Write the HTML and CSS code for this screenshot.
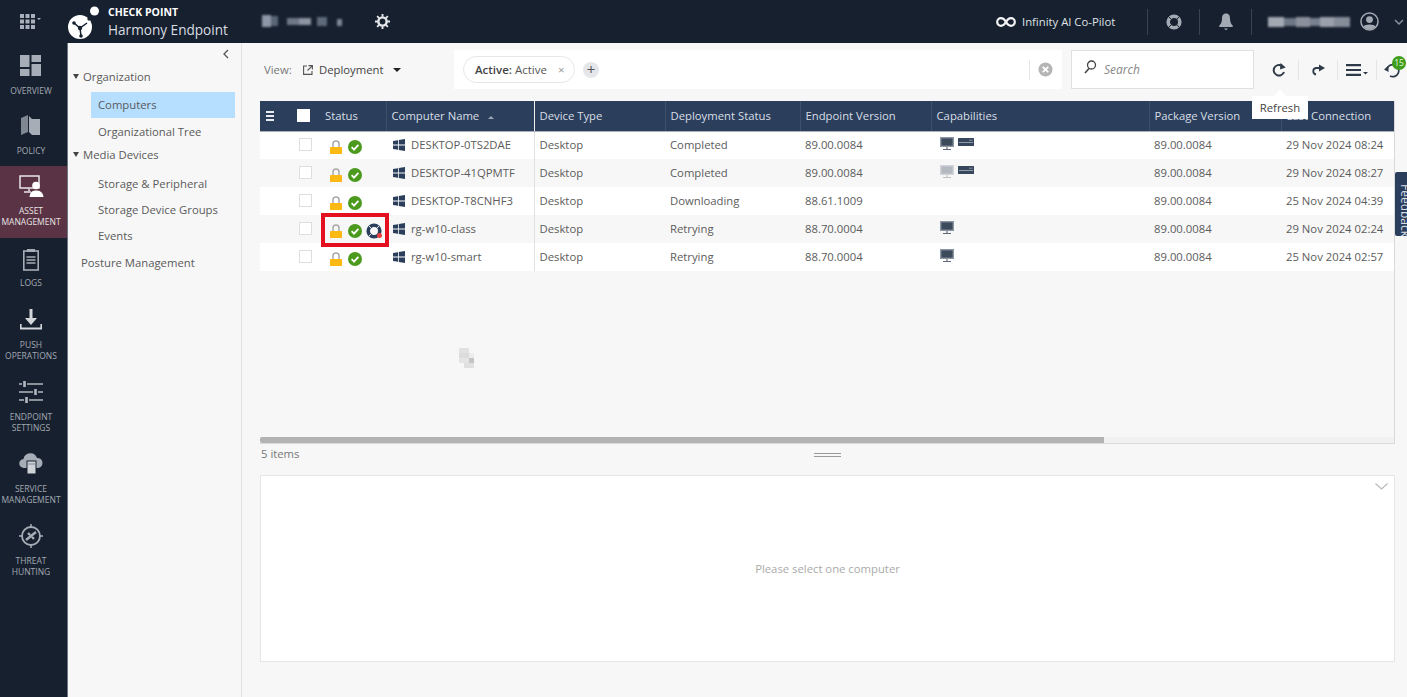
FILE: index.html
```html
<!DOCTYPE html>
<html>
<head>
  <title>Harmony Endpoint</title>
  <link rel="stylesheet" href="styles.css">
</head>
<body>

<!-- shared icons -->
<svg class="defs" width="0" height="0">
  <symbol id="i-win" viewBox="0 0 12 12"><path d="M0 2 L5 1.2 V5.6 H0Z M5.8 1 L12 0 V5.6 H5.8Z M0 6.4 H5 V10.8 L0 10Z M5.8 6.4 H12 V12 L5.8 11Z"/></symbol>
  <symbol id="i-lock" viewBox="0 0 12 14"><path d="M3 7 V4 a3 3 0 0 1 6 0 V7" fill="none" stroke="#a9a9a9" stroke-width="1.5"/><rect x="0" y="7" width="12" height="7" rx=".5" fill="#fdb913"/></symbol>
  <symbol id="i-ok" viewBox="0 0 14 14"><circle cx="7" cy="7" r="7" fill="#4b9a1e"/><path d="M3.6 7.2 L6 9.6 L10.4 4.8" fill="none" stroke="#fff" stroke-width="1.8"/></symbol>
  <symbol id="i-buoy" viewBox="0 0 16 16"><circle cx="8" cy="8" r="5.8" fill="none" stroke="#2b3f5c" stroke-width="3.6"/><path d="M2.6 2.6 L5 5 M13.4 2.6 L11 5 M2.6 13.4 L5 11" stroke="#dfe3e8" stroke-width="1"/></symbol>
  <symbol id="i-monitor" viewBox="0 0 14 13"><rect x=".7" y=".7" width="12.6" height="8.6" fill="#3d4a5c" stroke="#8c96a3" stroke-width="1.4"/><path d="M7 10 V12 M3 12.5 H11" stroke="#5d6876" stroke-width="1.1"/></symbol>
  <symbol id="i-server" viewBox="0 0 16 8"><rect width="16" height="8" rx=".5" fill="#36465c"/><path d="M1 4.5 H15" stroke="#aab2bd" stroke-width=".8"/><path d="M11 2.2 H14.5" stroke="#aab2bd" stroke-width=".7"/></symbol>
</svg>

<header class="topbar">
  <div class="apps">
    <svg width="24" height="16" viewBox="0 0 24 16" fill="#a9b0bb"><path d="M0 1h4v4H0zM5.5 1h4v4h-4zM11 1h4v4h-4zM0 6.5h4v4H0zM5.5 6.5h4v4h-4zM11 6.5h4v4h-4zM0 12h4v4H0zM5.5 12h4v4h-4zM11 12h4v4h-4z"/><path d="M17 5h4l-2 2z"/></svg>
  </div>
  <div class="logo">
    <svg width="32" height="36" viewBox="0 0 32 36">
      <circle cx="12" cy="21" r="12" fill="#fff"/>
      <circle cx="26.500" cy="5" r="4.500" fill="#fff"/>
      <path d="M24 10 L20 14" stroke="#17202f" stroke-width="3"/>
      <path d="M6 17 L12 22 L19 17 M12 22 L13 30" stroke="#17202f" stroke-width="1.500" fill="none"/>
      <circle cx="12" cy="22" r="2.200" fill="#17202f"/>
      <circle cx="6" cy="17" r="1.800" fill="#17202f"/>
      <circle cx="13" cy="30" r="1.800" fill="#17202f"/>
    </svg>
    <div class="brand">
      <b>CHECK POINT</b>
      <span>Harmony Endpoint</span>
    </div>
  </div>
  <svg class="mosaic tenant" width="80" height="12" viewBox="0 0 80 12">
    <rect width="9" height="12" x="0" fill="#8d97a6"/><rect width="7" height="10" x="9" y="1" fill="#596475"/>
    <rect width="12" height="7" x="25" y="3" fill="#6e7886"/><rect width="12" height="7" x="37" y="3" fill="#8d95a1"/>
    <rect width="10" height="9" x="55" y="2" fill="#5f6a79"/><rect width="5" height="7" x="75" y="4" fill="#7d8794"/>
  </svg>
  <svg class="gear" width="15" height="15" viewBox="0 0 16 16"><circle cx="8" cy="8" r="4.400" fill="none" stroke="#e6e8eb" stroke-width="2.600"/><path d="M8 0v3M8 13v3M0 8h3M13 8h3M2.300 2.300l2.100 2.100M11.600 11.600l2.100 2.100M2.300 13.700l2.100-2.100M11.600 4.400l2.100-2.100" stroke="#e6e8eb" stroke-width="2"/></svg>

  <div class="top-right">
    <div class="copilot">
      <svg width="20" height="10" viewBox="0 0 20 10"><path d="M10 5 C8 1.500 6.500 1.200 5 1.200 a3.800 3.800 0 0 0 0 7.600 C6.500 8.800 8 8.500 10 5 C12 1.500 13.500 1.200 15 1.200 a3.800 3.800 0 0 1 0 7.600 C13.500 8.800 12 8.500 10 5Z" fill="none" stroke="#f2f3f5" stroke-width="2.200"/></svg>
      <span>Infinity AI Co-Pilot</span>
    </div>
    <div class="top-btn">
      <svg width="16" height="16" viewBox="0 0 16 16"><circle cx="8" cy="8" r="5.800" fill="none" stroke="#a3aab4" stroke-width="3.600"/><path d="M2.600 2.600L5 5M13.400 2.600L11 5M2.600 13.400L5 11M13.400 13.400L11 11" stroke="#17202f" stroke-width="1"/></svg>
    </div>
    <div class="top-btn">
      <svg width="14" height="18" viewBox="0 0 14 18" fill="#a3aab4"><path d="M7 0.500 C3.800 .5 3 3 3 5.500 C3 9 2 11 .3 12.500 V14 H13.700 V12.500 C12 11 11 9 11 5.500 C11 3 10.200 .5 7 .5Z"/><path d="M5 15.500 H9 L7 17.300Z"/></svg>
    </div>
    <div class="top-user">
      <svg class="mosaic" width="82" height="10" viewBox="0 0 82 10">
        <rect width="16" height="10" fill="#a3a9b2"/><rect width="12" height="8" x="16" y="1" fill="#6e7785"/><rect width="14" height="10" x="28" fill="#8a919c"/>
        <rect width="10" height="8" x="42" y="1" fill="#77808d"/><rect width="14" height="10" x="52" fill="#9aa1ab"/><rect width="16" height="10" x="66" fill="#858d99"/>
      </svg>
      <svg width="19" height="19" viewBox="0 0 20 20"><circle cx="10" cy="10" r="9" fill="none" stroke="#a3aab4" stroke-width="1.600"/><circle cx="10" cy="8" r="3.600" fill="#a3aab4"/><path d="M3.500 15.500 C5 12.500 15 12.500 16.500 15.500 A9 9 0 0 1 3.500 15.500Z" fill="#a3aab4"/></svg>
      <svg class="user-caret" width="10" height="6" viewBox="0 0 10 6"><path d="M1 1l4 4 4-4" fill="none" stroke="#8d95a1" stroke-width="1.400"/></svg>
    </div>
  </div>
</header>

<div class="body-row">

  <!-- Left navigation -->
  <nav class="sidenav">
    <a class="nav-item">
      <svg width="22" height="22" viewBox="0 0 22 22" fill="#a7adb6"><path d="M0 0h9.500v12H0zM11.500 0H21v7h-9.500zM0 14h9.500v7H0zM11.500 9H21v12h-9.500z"/></svg>
      <span>OVERVIEW</span>
    </a>
    <a class="nav-item">
      <svg width="20" height="22" viewBox="0 0 20 22" fill="#a7adb6"><path d="M0 3 L7 0 V17 L0 20Z" fill="#7f8792"/><path d="M8 1 L11 4 H19 V20 H11 L8 17Z"/></svg>
      <span>POLICY</span>
    </a>
    <a class="nav-item nav-active">
      <svg width="25" height="22" viewBox="0 0 25 22"><path d="M1 1 H20 V13 H1Z" fill="none" stroke="#e9e3e6" stroke-width="1.500"/><path d="M10 13.500 V16 M5 17 H12" stroke="#e9e3e6" stroke-width="1.500"/><circle cx="17" cy="10.500" r="3.800" fill="#fff"/><path d="M10.500 22 C11 16.500 14 15.500 17 15.500 C20 15.500 24 16.500 24.500 22Z" fill="#fff"/></svg>
      <span>ASSET<br>MANAGEMENT</span>
    </a>
    <a class="nav-item">
      <svg width="16" height="22" viewBox="0 0 16 22"><rect x=".8" y="2" width="14.400" height="19" fill="none" stroke="#a7adb6" stroke-width="1.600"/><rect x="4" y="0" width="8" height="3" fill="#a7adb6"/><path d="M3.500 8h9M3.500 11h9M3.500 14h9" stroke="#a7adb6" stroke-width="1.500"/></svg>
      <span>LOGS</span>
    </a>
    <a class="nav-item">
      <svg width="22" height="22" viewBox="0 0 22 22"><path d="M11 0 V12" stroke="#d3d6db" stroke-width="3"/><path d="M5 9 H17 L11 16Z" fill="#d3d6db"/><path d="M.500 15 V19.500 H21.500 V15" fill="none" stroke="#d3d6db" stroke-width="2.200"/></svg>
      <span>PUSH<br>OPERATIONS</span>
    </a>
    <a class="nav-item">
      <svg width="24" height="22" viewBox="0 0 24 22" fill="none" stroke="#b2b7bf" stroke-width="1.500"><path d="M0 3h3M8 3h16M0 11h14M19 11h5M0 19h5M10 19h14"/><path d="M5.500 0v6M16.500 8v6M7.500 16v6" stroke-width="2.600"/></svg>
      <span>ENDPOINT<br>SETTINGS</span>
    </a>
    <a class="nav-item">
      <svg width="24" height="22" viewBox="0 0 24 22"><path d="M5 15 a4.500 4.500 0 0 1 -.5 -9 a7 7 0 0 1 13.500 -1 a5 5 0 0 1 1 10Z" fill="#a7adb6"/><rect x="8" y="8" width="9" height="13" fill="#cfd2d7" stroke="#17202f"/><path d="M8 11 H17" stroke="#7f8792"/></svg>
      <span>SERVICE<br>MANAGEMENT</span>
    </a>
    <a class="nav-item">
      <svg width="24" height="24" viewBox="0 0 24 24" fill="none" stroke="#a7adb6"><circle cx="12" cy="12" r="9" stroke-width="1.800"/><path d="M12 0v4M12 20v4M0 12h4M20 12h4" stroke-width="1.500"/><path d="M7 16 L17 8 M9 9 L11 11 M13 13 L15 15" stroke-width="2.400"/></svg>
      <span>THREAT<br>HUNTING</span>
    </a>
  </nav>

  <!-- Tree -->
  <aside class="tree">
    <svg class="tree-collapse" width="6" height="10" viewBox="0 0 6 10"><path d="M5 1L1 5l4 4" fill="none" stroke="#555" stroke-width="1.300"/></svg>
    <div class="tree-head tree-org">Organization</div>
    <div class="tree-leaf tree-selected">Computers</div>
    <div class="tree-leaf">Organizational Tree</div>
    <div class="tree-head tree-media">Media Devices</div>
    <div class="tree-leaf">Storage &amp; Peripheral</div>
    <div class="tree-leaf">Storage Device Groups</div>
    <div class="tree-leaf">Events</div>
    <div class="tree-root">Posture Management</div>
  </aside>

  <main class="content">
    <div class="toolbar">
      <div class="view">
        <span class="view-label">View:</span>
        <svg width="10" height="10" viewBox="0 0 10 10" fill="none" stroke="#555" stroke-width="1.100"><path d="M4 1H.6v8.400H9V6"/><path d="M5.500.6H9.400V4.500M9.200.8L4.500 5.500"/></svg>
        <span class="view-name">Deployment</span>
        <i class="caret"></i>
      </div>
      <div class="filter">
        <div class="chip"><b>Active:</b> Active <span class="chip-x">×</span></div>
        <div class="chip-add">+</div>
        <div class="filter-clear">
          <svg width="15" height="15" viewBox="0 0 15 15"><circle cx="7.500" cy="7.500" r="7" fill="#b5b5b5"/><path d="M4.800 4.800l5.400 5.400M10.200 4.800l-5.400 5.400" stroke="#fff" stroke-width="1.800"/></svg>
        </div>
      </div>
      <div class="search">
        <svg width="13" height="14" viewBox="0 0 13 14" fill="none" stroke="#444" stroke-width="1.300"><circle cx="7.500" cy="5" r="4"/><path d="M5 8.500L1 13" stroke-width="1.600"/></svg>
        <span>Search</span>
      </div>
      <div class="tools">
        <div class="tool">
          <svg width="14" height="14" viewBox="0 0 14 14" fill="none"><path d="M12 9 A5.300 5.300 0 1 1 9.800 2.700" stroke="#2f3a48" stroke-width="2"/><path d="M8.500 0 L13.800 4.500 L8 6.500Z" fill="#2f3a48"/></svg>
          <div class="tooltip">Refresh</div>
        </div>
        <div class="tool">
          <svg width="14" height="12" viewBox="0 0 14 12" fill="none"><path d="M8 4 H5 A3.300 3.300 0 0 0 5 10.500" stroke="#2f3a48" stroke-width="1.800"/><path d="M8 .5 L14 4 L8 7.500Z" fill="#2f3a48"/></svg>
        </div>
        <div class="tool">
          <svg width="22" height="12" viewBox="0 0 22 12" fill="#2f3a48"><path d="M0 0h15v2.200H0zM0 4.900h15v2.200H0zM0 9.800h15V12H0zM17 8h5l-2.500 2.500z"/></svg>
        </div>
        <div class="tool tool-history">
          <svg width="16" height="16" viewBox="0 0 16 16" fill="none"><path d="M3 7 A6 6 0 1 1 6 14" stroke="#2f3a48" stroke-width="1.700"/><path d="M0 7.500 L4.500 3.500 V10Z" fill="#2f3a48"/></svg>
          <span class="badge">15</span>
        </div>
      </div>
    </div>

    <div class="grid-wrap">
      <div class="grid-scroll">
        <table class="grid">
          <colgroup>
            <col class="c-menu"><col class="c-check"><col class="c-status"><col class="c-name"><col class="c-type">
            <col class="c-deploy"><col class="c-version"><col class="c-cap"><col class="c-pkg"><col class="c-last">
          </colgroup>
          <thead>
            <tr>
              <th class="no-sep"><div class="menu-bars"></div></th>
              <th class="no-sep"><div class="head-check"></div></th>
              <th>Status</th>
              <th class="sep-white">Computer Name <i class="sort"></i></th>
              <th>Device Type</th>
              <th>Deployment Status</th>
              <th>Endpoint Version</th>
              <th>Capabilities</th>
              <th>Package Version</th>
              <th>Last Connection</th>
            </tr>
          </thead>
          <tbody>
            <tr>
              <td></td><td><div class="row-check"></div></td>
              <td><div class="status"><svg class="ic-lock"><use href="#i-lock"/></svg><svg class="ic-ok"><use href="#i-ok"/></svg></div></td>
              <td class="name-cell"><div class="name"><svg class="ic-win"><use href="#i-win"/></svg>DESKTOP-0TS2DAE</div></td>
              <td>Desktop</td><td>Completed</td><td>89.00.0084</td>
              <td><div class="caps"><svg class="ic-mon"><use href="#i-monitor"/></svg><svg class="ic-srv"><use href="#i-server"/></svg></div></td>
              <td>89.00.0084</td><td>29 Nov 2024 08:24</td>
            </tr>
            <tr>
              <td></td><td><div class="row-check"></div></td>
              <td><div class="status"><svg class="ic-lock"><use href="#i-lock"/></svg><svg class="ic-ok"><use href="#i-ok"/></svg></div></td>
              <td class="name-cell"><div class="name"><svg class="ic-win"><use href="#i-win"/></svg>DESKTOP-41QPMTF</div></td>
              <td>Desktop</td><td>Completed</td><td>89.00.0084</td>
              <td><div class="caps"><svg class="ic-mon faded"><use href="#i-monitor"/></svg><svg class="ic-srv"><use href="#i-server"/></svg></div></td>
              <td>89.00.0084</td><td>29 Nov 2024 08:27</td>
            </tr>
            <tr>
              <td></td><td><div class="row-check"></div></td>
              <td><div class="status"><svg class="ic-lock"><use href="#i-lock"/></svg><svg class="ic-ok"><use href="#i-ok"/></svg></div></td>
              <td class="name-cell"><div class="name"><svg class="ic-win"><use href="#i-win"/></svg>DESKTOP-T8CNHF3</div></td>
              <td>Desktop</td><td>Downloading</td><td>88.61.1009</td>
              <td></td>
              <td>89.00.0084</td><td>25 Nov 2024 04:39</td>
            </tr>
            <tr>
              <td></td><td><div class="row-check"></div></td>
              <td>
                <div class="status flagged">
                  <svg class="ic-lock"><use href="#i-lock"/></svg><svg class="ic-ok"><use href="#i-ok"/></svg>
                  <span class="buoy"><svg class="ic-buoy"><use href="#i-buoy"/></svg><i class="buoy-dot"></i></span>
                </div>
              </td>
              <td class="name-cell"><div class="name"><svg class="ic-win"><use href="#i-win"/></svg>rg-w10-class</div></td>
              <td>Desktop</td><td>Retrying</td><td>88.70.0004</td>
              <td><div class="caps"><svg class="ic-mon"><use href="#i-monitor"/></svg></div></td>
              <td>89.00.0084</td><td>29 Nov 2024 02:24</td>
            </tr>
            <tr>
              <td></td><td><div class="row-check"></div></td>
              <td><div class="status"><svg class="ic-lock"><use href="#i-lock"/></svg><svg class="ic-ok"><use href="#i-ok"/></svg></div></td>
              <td class="name-cell"><div class="name"><svg class="ic-win"><use href="#i-win"/></svg>rg-w10-smart</div></td>
              <td>Desktop</td><td>Retrying</td><td>88.70.0004</td>
              <td><div class="caps"><svg class="ic-mon"><use href="#i-monitor"/></svg></div></td>
              <td>89.00.0084</td><td>25 Nov 2024 02:57</td>
            </tr>
          </tbody>
        </table>
        <svg class="pointer" width="15" height="20" viewBox="0 0 15 20">
          <rect width="10" height="5" fill="#e2e2e2"/><rect y="5" width="10" height="5" fill="#dcdcdc"/><rect x="10" y="5" width="5" height="5" fill="#ececec"/>
          <rect y="10" width="10" height="5" fill="#e4e4e4"/><rect x="10" y="10" width="5" height="5" fill="#c4c4c4"/><rect x="5" y="15" width="10" height="5" fill="#e0e0e0"/>
        </svg>
      </div>
      <div class="hscroll"><div class="hscroll-thumb"></div></div>
    </div>

    <div class="grid-foot">
      <span>5 items</span>
      <div class="grip"></div>
      <span></span>
    </div>

    <section class="detail">
      <svg class="detail-toggle" width="13" height="7" viewBox="0 0 13 7"><path d="M.5.500l6 5.500 6-5.500" fill="none" stroke="#b9b9b9" stroke-width="1.200"/></svg>
      <span>Please select one computer</span>
    </section>
  </main>
</div>

<div class="feedback"><span>Feedback</span></div>

</body>
</html>
```

FILE: styles.css
```css
* { box-sizing: border-box; }
html, body { margin: 0; height: 100%; }
body {
  width: 1407px; height: 697px; overflow: hidden; position: relative;
  font-family: "Open Sans", "Noto Sans", sans-serif; font-size: 11.3px; color: #555;
  background: #f7f7f7;
}
.defs { position: absolute; }
svg { display: block; flex: none; }

/* top bar */
.topbar { display: flex; align-items: center; height: 43px; background: #17202f; color: #e8eaed; }
.apps   { width: 68px; padding: 0 0 2px 20px; }
.logo   { display: flex; align-items: center; gap: 8px; width: 194px; }
.logo svg { margin-top: 4px; }
.brand  { display: flex; flex-direction: column; padding-top: 1px; }
.brand b    { font-size: 10.5px; line-height: 15px; color: #fff; }
.brand span { font-size: 13.6px; line-height: 19px; color: #d9dce0; }
.mosaic { filter: blur(1px); }
.tenant { margin-top: -2px; }
.gear   { margin: -1px 0 0 33px; }

.top-right { display: flex; align-items: center; margin-left: auto; height: 100%; }
.copilot   { display: flex; align-items: center; gap: 6px; width: 152px; height: 26px; border-right: 1px solid #3a4352; }
.copilot span { font-size: 11.3px; color: #dfe2e6; }
.top-btn   { display: flex; justify-content: center; align-items: center; width: 52px; height: 26px; border-right: 1px solid #3a4352; }
.top-user  { display: flex; align-items: center; width: 155px; padding-left: 16px; }
.top-user svg + svg { margin-left: 10px; }
.top-user .user-caret { margin-left: 15px; }

.body-row { display: flex; height: 654px; }

/* left nav */
.sidenav { width: 68px; padding-top: 3px; background: #17202f; border-right: 1px solid #6f7580; }
.nav-item {
  display: flex; flex-direction: column; align-items: center;
  height: 60px; padding: 8px 5px 0 0;
  font-size: 8.5px; line-height: 10.5px; text-align: center; color: #a3a9b2;
}
.nav-item svg { height: 24px; margin-bottom: 8px; }
.nav-item span { white-space: nowrap; }
.nav-item:has(br) { height: 72px; }
.nav-active { margin-bottom: 2px; background: #5a3444; color: #e9e3e6; }
.nav-active + .nav-item svg { margin-bottom: 6px; }

/* tree */
.tree { position: relative; width: 174px; padding-top: 25px; border-right: 1px solid #e3e3e3; font-size: 11.3px; color: #5a5a5a; }
.tree-collapse { position: absolute; top: 6px; left: 155px; }
.tree-head { position: relative; padding-left: 15px; line-height: 18px; }
.tree-head::before {
  content: ""; position: absolute; left: 5px; top: 6px;
  border: 3.500px solid transparent; border-top: 5px solid #444; border-bottom: 0;
}
.tree-org   { margin-bottom: 6px; }
.tree-media { margin: 1px 0 7px; }
.tree-leaf  { margin-left: 23px; width: 144px; padding-left: 7px; height: 26px; line-height: 26px; }
.tree-selected { background: #b5deff; margin-bottom: 1px; }
.tree-root  { padding-left: 13px; margin-top: 1px; line-height: 26px; }

/* main column */
.content { flex: 1; display: flex; flex-direction: column; min-width: 0; padding: 0 12px 0 18px; }
.toolbar { display: flex; align-items: center; height: 39px; margin: 7px -12px 12px 0; }
.view { display: flex; align-items: center; width: 194px; padding-left: 4px; }
.view-label { width: 39px; color: #777; }
.view-name  { margin: 0 9px 0 6px; color: #444; }
.caret { border: 4px solid transparent; border-top: 4px solid #222; border-bottom: 0; }

.filter { display: flex; align-items: center; width: 608px; height: 39px; padding-left: 9px; background: #fff; }
.chip {
  height: 27px; width: 112px; padding-left: 11px; line-height: 25px;
  border: 1px solid #e6e6e6; border-radius: 14px; color: #555; white-space: nowrap;
  font-size: 11.5px;
}
.chip b { color: #444; font-weight: 600; }
.chip-x { margin-left: 8px; color: #999; }
.chip-add {
  width: 16px; height: 16px; margin-left: 8px; border-radius: 50%;
  background: #e4e6ea; text-align: center; font-size: 15px; line-height: 15px; color: #555;
}
.filter-clear { display: flex; align-items: center; height: 20px; margin-left: auto; padding: 0 9px 0 8px; border-left: 1px solid #e6e6e6; }

.search {
  display: flex; align-items: center; gap: 7px; width: 183px; height: 39px; margin: 0 6px 0 9px; padding: 0 0 1px 12px;
  background: #fff; border: 1px solid #e0e0e0;
  font-style: italic; font-size: 12px; color: #888;
}
.search svg { margin-top: -5px; }
.tools { display: flex; align-items: center; }
.tool  { position: relative; display: flex; justify-content: center; align-items: center; width: 39px; height: 20px; border-right: 1px solid #e5e5e5; }
.tool-history { width: 30px; border-right: 0; }
.tooltip {
  position: absolute; top: 36px; left: -8px; width: 56px; height: 23px; z-index: 5;
  background: #fff; color: #444; text-align: center; line-height: 23px; font-size: 11.3px;
}
.tooltip::before {
  content: ""; position: absolute; top: -6px; left: 22px;
  border: 6px solid transparent; border-bottom: 6px solid #fff; border-top: 0;
}
.badge {
  position: absolute; top: -4px; left: 15px; width: 14px; height: 14px; border-radius: 50%;
  background: #3f9d1d; color: #e9f5df; font-size: 8.500px; line-height: 14px; text-align: center;
}

/* grid */
.grid-wrap { position: relative; display: flex; flex-direction: column; height: 343px; border-right: 1px solid #d9d9d9; border-bottom: 1px solid #d9d9d9; }
.grid-scroll { position: relative; flex: 1; overflow: hidden; }
.grid { table-layout: fixed; width: 1134px; border-collapse: collapse; }
.c-menu { width: 28px; } .c-check { width: 32px; } .c-status { width: 66px; }
.c-name { width: 148px; } .c-type { width: 131px; } .c-deploy { width: 135px; }
.c-version { width: 131px; } .c-cap { width: 218px; } .c-pkg { width: 132px; } .c-last { width: 113px; }

.grid th {
  height: 30px; padding: 0 0 0 5px; background: #2b3f5c;
  border-right: 1px solid #3d4f6a; border-bottom: 1px solid #aab0b8;
  font-weight: 400; font-size: 11.3px; text-align: left; color: #d8dee6; white-space: nowrap;
}
.grid th.no-sep { border-right: 0; padding: 0; }
.grid th.sep-white { border-right-color: #eef0f2; }
.menu-bars { width: 8px; height: 10px; margin: 0 0 0 6px; border-top: 2px solid #e8ecf0; border-bottom: 2px solid #e8ecf0; position: relative; }
.menu-bars::after { content: ""; position: absolute; left: 0; right: 0; top: 2px; height: 2px; background: #e8ecf0; }
.head-check { width: 13px; height: 13px; margin-left: 9px; background: #fff; }
.sort { display: inline-block; margin: 0 0 1px 6px; border: 3px solid transparent; border-bottom: 3px solid #9aa6b5; border-top: 0; }

.grid td { height: 28px; padding: 0 0 2px 5px; font-size: 11.3px; color: #5c5c5c; white-space: nowrap; }
.grid tbody tr:nth-child(even) td { background: #f7f7f7; }
.grid tbody tr:nth-child(odd) td { background: #fff; }
.grid td.name-cell { border-right: 1px solid #e2e2e2; }
.grid td:nth-child(1), .grid td:nth-child(2) { padding: 0 0 2px; }
.row-check { width: 13px; height: 13px; margin: 1px 0 0 11px; background: #fff; border: 1px solid #dedede; }

.status { position: relative; display: flex; align-items: center; padding: 5px 0 0 5px; }
.ic-lock { width: 12px; height: 14px; margin-right: 6px; }
.ic-ok   { width: 14px; height: 14px; }
.buoy    { position: relative; margin-left: 4px; }
.ic-buoy { width: 16px; height: 16px; }
.buoy-dot { position: absolute; right: 0; bottom: 1px; width: 5px; height: 5px; border-radius: 50%; background: #ee3f3f; }
.flagged::after {
  content: ""; position: absolute; left: -4px; top: -5px; width: 60px; height: 26px; z-index: 2;
  border: 4px solid #e5101f; pointer-events: none;
}

.name { display: flex; align-items: center; color: #5c5c5c; }
.ic-win { width: 12px; height: 12px; margin: 1px 6px 0 2px; fill: #2b3f5c; }
.caps { display: flex; align-items: center; gap: 4px; margin: -2px 0 0 4px; }
.ic-mon { width: 14px; height: 13px; }
.ic-srv { width: 16px; height: 8px; margin-top: -3px; }
.faded  { opacity: .35; }

.pointer { position: absolute; left: 199px; top: 247px; filter: blur(.3px); }

.hscroll { height: 6px; background: #f1f1f1; }
.hscroll-thumb { width: 844px; height: 100%; background: #b3b3b3; border-radius: 2px 0 0 2px; }

.grid-foot { display: grid; grid-template-columns: 1fr auto 1fr; align-items: center; height: 31px; padding: 0 1px 12px; color: #777; }
.grip { width: 27px; height: 4px; border-top: 1px solid #999; border-bottom: 1px solid #999; margin-top: 2px; }

.detail {
  position: relative; display: flex; justify-content: center; align-items: center;
  height: 187px; background: #fff; border: 1px solid #e6e6e6; color: #aaa;
}
.detail-toggle { position: absolute; top: 7px; right: 6px; }

.feedback {
  position: absolute; top: 172px; right: 0; width: 12px; height: 64px; overflow: hidden;
  background: #2b3f5c; border-radius: 2px 0 0 2px; color: #d8dee6;
}
.feedback span { position: absolute; left: 4px; top: 12px; writing-mode: vertical-rl; font-size: 12px; line-height: 12px; white-space: nowrap; }
```
